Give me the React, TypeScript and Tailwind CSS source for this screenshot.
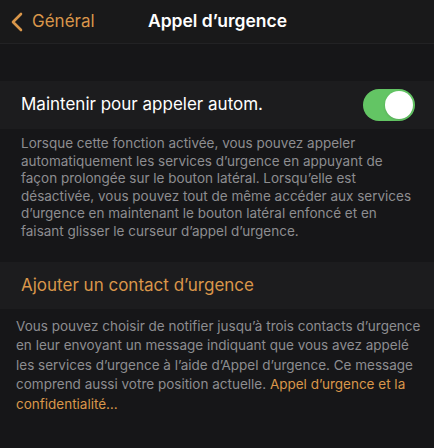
export default function App() {
  return (
    <div className="w-[434px] h-[448px] bg-[#161618] overflow-hidden font-['Inter',sans-serif] antialiased">
      {/* NAV */}
      <div className="relative h-[44px] bg-[#19191a] border-b border-[#222224] flex items-center">
        <div className="flex items-center pl-[11px] text-[#d9964a]">
          <svg width="12" height="20" viewBox="0 0 12 20" fill="none">
            <path d="M10 2L2 10L10 18" stroke="currentColor" strokeWidth="2.6" strokeLinecap="round" strokeLinejoin="round" />
          </svg>
          <span className="ml-[9px] text-[17px]">Général</span>
        </div>
        <div className="absolute left-0 right-0 text-center pl-[1px] text-white font-semibold text-[17.5px] pointer-events-none">
          Appel d’urgence
        </div>
      </div>

      {/* AUTO CALL */}
      <div className="mt-[37px] h-[48px] bg-[#1c1c1e] flex items-center justify-between pl-[21px] pr-[19px]">
        <span className="text-white text-[17px]">Maintenir pour appeler autom.</span>
        <div className="w-[52px] h-[32px] rounded-full bg-[#63c564] flex items-center justify-end p-[2px]">
          <div className="w-[28px] h-[28px] rounded-full bg-white shadow" />
        </div>
      </div>
      <p className="pl-[21px] pr-[20px] pt-[6px] text-[13.5px] leading-[17.5px] text-[#8d8d90]">
        Lorsque cette fonction activée, vous pouvez appeler automatiquement les services d’urgence en appuyant de façon prolongée sur le bouton latéral. Lorsqu’elle est désactivée, vous pouvez tout de même accéder aux services d’urgence en maintenant le bouton latéral enfoncé et en faisant glisser le curseur d’appel d’urgence.
      </p>

      {/* CONTACT */}
      <div className="mt-[22px] h-[47px] bg-[#1c1c1e] flex items-center pl-[21px]">
        <span className="text-[#d9964a] text-[17px]">Ajouter un contact d’urgence</span>
      </div>
      <p className="pl-[16px] pr-[13px] pt-[8px] text-[13.5px] leading-[19.4px] text-[#8d8d90]">
        Vous pouvez choisir de notifier jusqu’à trois contacts d’urgence en leur envoyant un message indiquant que vous avez appelé les services d’urgence à l’aide d’Appel d’urgence. Ce message comprend aussi votre position actuelle.{' '}
        <span className="text-[#d9964a]">Appel d’urgence et la confidentialité…</span>
      </p>
    </div>
  );
}
